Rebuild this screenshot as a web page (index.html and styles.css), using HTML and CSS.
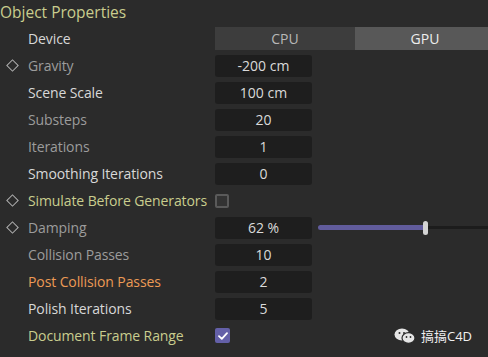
FILE: index.html
```html
<!DOCTYPE html>
<html>
<head>
<meta charset="utf-8">
<link rel="stylesheet" href="styles.css">
</head>
<body>
<div class="panel">
  <div class="title">Object Properties</div>
  <div class="rows">
    <div class="row"><span class="key"></span><span class="label bright">Device</span>
      <div class="tabs"><div class="tab">CPU</div><div class="tab active">GPU</div></div></div>
    <div class="row"><span class="key"><span class="diamond"></span></span><span class="label dim">Gravity</span><div class="field">-200 cm</div></div>
    <div class="row"><span class="key"></span><span class="label bright">Scene Scale</span><div class="field">100 cm</div></div>
    <div class="row"><span class="key"></span><span class="label dim">Substeps</span><div class="field">20</div></div>
    <div class="row"><span class="key"></span><span class="label dim">Iterations</span><div class="field">1</div></div>
    <div class="row"><span class="key"></span><span class="label bright">Smoothing Iterations</span><div class="field">0</div></div>
    <div class="row"><span class="key"><span class="diamond"></span></span><span class="label green">Simulate Before Generators</span><div class="cb-cell"><span class="cb"></span></div></div>
    <div class="row"><span class="key"><span class="diamond"></span></span><span class="label dim">Damping</span><div class="field">62 %</div>
      <div class="slider"><div class="fill"></div><div class="knob"></div><div class="rest"></div></div></div>
    <div class="row"><span class="key"></span><span class="label dim">Collision Passes</span><div class="field">10</div></div>
    <div class="row"><span class="key"></span><span class="label orange">Post Collision Passes</span><div class="field">2</div></div>
    <div class="row"><span class="key"></span><span class="label bright">Polish Iterations</span><div class="field">5</div></div>
    <div class="row"><span class="key"></span><span class="label green">Document Frame Range</span><div class="cb-cell"><span class="cb checked"><svg width="10" height="8" viewBox="0 0 10 8"><path d="M1 4.2 L3.8 6.8 L9 1.2" fill="none" stroke="#ffffff" stroke-width="1.8" stroke-linecap="round" stroke-linejoin="round"/></svg></span></div>
      <div class="mark">
        <svg width="22" height="16" viewBox="0 0 22 16"><ellipse cx="8" cy="6.5" rx="7.5" ry="6" fill="#e6e6e6"/><ellipse cx="14.5" cy="10" rx="6.5" ry="5.3" fill="#e6e6e6" stroke="#2b2b2b" stroke-width="1.2"/><circle cx="5.5" cy="5" r="1" fill="#2b2b2b"/><circle cx="10" cy="5" r="1" fill="#2b2b2b"/><circle cx="12.5" cy="9" r="0.9" fill="#2b2b2b"/><circle cx="16.5" cy="9" r="0.9" fill="#2b2b2b"/></svg>
        <span>搞搞C4D</span>
      </div>
    </div>
  </div>
</div>
</body>
</html>
```
FILE: styles.css
```css
html, body {
  margin: 0;
  padding: 0;
  background: #2b2b2b;
}
body {
  width: 488px;
  height: 357px;
  overflow: hidden;
  font-family: "Open Sans", "Noto Sans", "Noto Sans CJK SC", sans-serif;
}
.panel {
  display: flex;
  flex-direction: column;
}
.title {
  height: 27px;
  line-height: 24px;
  font-size: 15.5px;
  color: #c9cd8e;
}
.rows {
  display: flex;
  flex-direction: column;
  gap: 4px;
}
.row {
  display: flex;
  align-items: center;
  height: 23px;
  font-size: 14px;
}
.key {
  width: 28px;
  flex: none;
  display: flex;
  justify-content: center;
  padding-right: 4px;
  box-sizing: border-box;
}
.diamond {
  width: 7px;
  height: 7px;
  border: 1.5px solid #b0b0b0;
  transform: rotate(45deg);
}
.label {
  width: 187px;
  flex: none;
  white-space: nowrap;
  letter-spacing: -0.1px;
}
.bright { color: #d8d8d8; }
.dim { color: #9c9c9c; }
.green { color: #c9cd8e; }
.orange { color: #ec9a55; }
.tabs {
  display: flex;
  flex: 1;
  height: 23px;
}
.tab {
  width: 140px;
  background: #3d3d3d;
  color: #b8b8b8;
  text-align: center;
  line-height: 23px;
  font-size: 14px;
}
.tab.active {
  flex: 1;
  background: #585858;
  color: #eeeeee;
}
.field {
  width: 97px;
  height: 22px;
  flex: none;
  background: #1e1e1e;
  border-radius: 3px;
  color: #dadada;
  text-align: center;
  line-height: 22px;
}
.cb-cell {
  width: 97px;
  flex: none;
  display: flex;
  align-items: center;
}
.cb {
  width: 14px;
  height: 14px;
  box-sizing: border-box;
  border: 2px solid #5a5a5a;
  border-radius: 2px;
  background: #333333;
  display: flex;
  align-items: center;
  justify-content: center;
}
.cb.checked {
  border: none;
  background: #6460a8;
  height: 15px;
  width: 15px;
}
.slider {
  flex: 1;
  margin-left: 6px;
  display: flex;
  align-items: center;
}
.fill {
  width: 107px;
  height: 5px;
  border-radius: 3px;
  background: #615c9c;
}
.knob {
  width: 5px;
  height: 14px;
  border-radius: 3px;
  background: #d4d4d4;
  margin-left: -2px;
}
.rest {
  flex: 1;
  height: 3px;
  background: #1c1c1c;
}
.mark {
  margin-left: auto;
  margin-right: 16px;
  display: flex;
  align-items: center;
  gap: 5px;
  color: #f0f0f0;
  font-size: 13px;
}
```
